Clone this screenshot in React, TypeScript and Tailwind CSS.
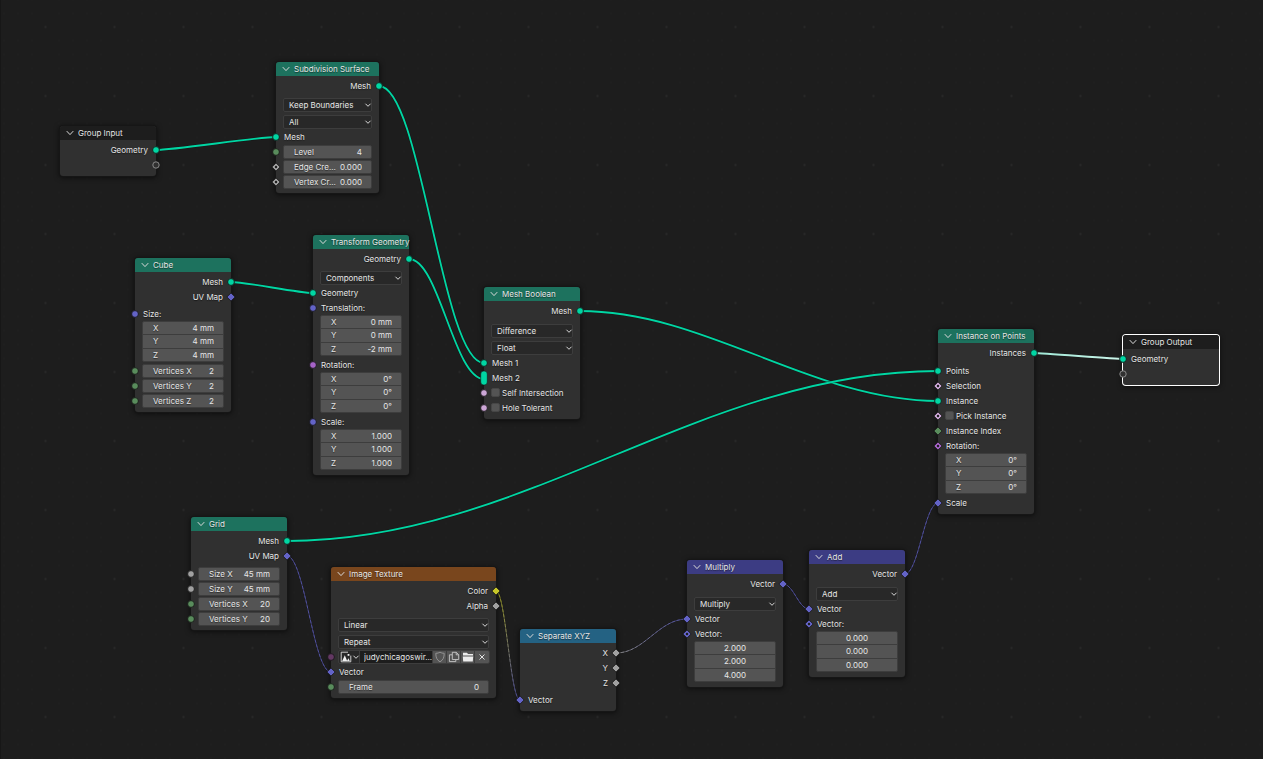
import type { ReactNode } from "react";

type Shape = "circle" | "diamond" | "dot" | "virtual" | "multi";

const GEOMETRY = "#00d6a3";
const VECTOR = "#6363c7";
const INTEGER = "#598c5c";
const FLOAT = "#a1a1a1";
const BOOLEAN = "#cca6d6";
const ROTATION = "#a663c7";
const COLOR = "#c7c729";
const IMAGE = "#633863";

function Socket({ color, shape = "circle", side }: { color: string; shape?: Shape; side: "in" | "out" }) {
  const edge = side === "in" ? "-left-2" : "-right-2";
  return (
    <svg viewBox="-8 -8 16 16" className={`absolute top-0 size-4 ${edge}`} aria-hidden="true">
      {shape === "circle" && <circle r="3.4" fill={color} stroke="#161616" strokeWidth="0.9" />}
      {shape === "virtual" && <circle r="3.2" fill="#303030" stroke="#8a8a8a" strokeWidth="1" />}
      {shape === "multi" && (
        <rect x="-3.3" y="-7" width="6.6" height="14" rx="3" fill={color} stroke="#161616" strokeWidth="0.6" />
      )}
      {(shape === "diamond" || shape === "dot") && (
        <path d="M0-4.1 4.1 0 0 4.1-4.1 0Z" fill={color} stroke="#161616" strokeWidth="0.8" strokeLinejoin="round" />
      )}
      {shape === "dot" && <circle r="1.2" fill="#1d1d1d" />}
    </svg>
  );
}

function Chevron({ className, small = false }: { className: string; small?: boolean }) {
  return (
    <svg viewBox="0 0 8 8" className={className} fill="none" stroke="#d9d9d9" strokeWidth="1" aria-hidden="true">
      <path
        d={small ? "M1.7 3 4 5.3 6.3 3" : "M1 2.4 4 5.6 7 2.4"}
        strokeLinecap="round"
        strokeLinejoin="round"
      />
    </svg>
  );
}

function Node({
  title,
  place,
  header,
  active = false,
  children,
}: {
  title: string;
  place: string;
  header: string;
  active?: boolean;
  children: ReactNode;
}) {
  const outline = active ? "ring-1 ring-white" : "ring-1 ring-[#161616]";
  return (
    <section
      aria-label={title}
      className={`absolute rounded-[3px] bg-[#303030] pb-1 shadow-[0_1px_5px_1px_rgba(0,0,0,0.55)] ${outline} ${place}`}
    >
      <header className={`mb-[2px] flex h-[14px] items-center gap-1 rounded-t-[3px] pl-[6px] ${header}`}>
        <button type="button" aria-label={`Collapse ${title}`} className="size-2">
          <Chevron className="size-2" />
        </button>
        <h2 className="whitespace-nowrap">{title}</h2>
      </header>
      {children}
    </section>
  );
}

function Output({ label, color, shape }: { label: string; color: string; shape?: Shape }) {
  return (
    <div className="relative flex h-[15px] items-center justify-end px-2">
      {label}
      <Socket color={color} shape={shape} side="out" />
    </div>
  );
}

function Input({ label, color, shape }: { label: string; color: string; shape?: Shape }) {
  return (
    <div className="relative flex h-[15px] items-center px-2">
      {label}
      <Socket color={color} shape={shape} side="in" />
    </div>
  );
}

function Check({ label, color, shape }: { label: string; color: string; shape?: Shape }) {
  return (
    <div className="relative flex h-[15px] items-center px-[7px]">
      <label className="flex items-center gap-[2px]">
        <input
          type="checkbox"
          className="size-[9px] appearance-none rounded-[2px] border border-[#464646] bg-[#545454] checked:bg-[#4772b3]"
        />
        {label}
      </label>
      <Socket color={color} shape={shape} side="in" />
    </div>
  );
}

function Dropdown({ label, value }: { label: string; value: string }) {
  return (
    <div className="flex h-[17px] items-end px-[7px]">
      <div className="relative w-full">
        <select
          aria-label={label}
          defaultValue={value}
          className="block h-[14px] w-full appearance-none rounded-[2px] border border-[#3d3d3d] bg-[#282828] pl-[5px]"
        >
          <option>{value}</option>
        </select>
        <Chevron small className="pointer-events-none absolute top-[3px] right-0 size-2" />
      </div>
    </div>
  );
}

function Field({ label, value, color, shape }: { label: string; value: string; color: string; shape?: Shape }) {
  return (
    <div className="relative flex h-[15px] items-center px-[7px]">
      <label className="flex h-[14px] w-full items-center rounded-[2px] border border-[#3d3d3d] bg-[#545454] pr-[9px] pl-[10px]">
        <span className="shrink-0">{label}</span>
        <input defaultValue={value} className="w-0 min-w-0 flex-1 bg-transparent text-right" />
      </label>
      <Socket color={color} shape={shape} side="in" />
    </div>
  );
}

function Vector({ name, values, labelled = true }: { name: string; values: string[]; labelled?: boolean }) {
  const axes = ["X", "Y", "Z"];
  return (
    <div className="px-[7px] pb-px">
      <div className="flex h-[41px] flex-col divide-y divide-[#3d3d3d] rounded-[2px] border border-[#3d3d3d] bg-[#545454]">
        {values.map((value, i) =>
          labelled ? (
            <label key={axes[i]} className="flex flex-1 items-center pr-[9px] pl-[10px]">
              <span>{axes[i]}</span>
              <input
                aria-label={`${name} ${axes[i]}`}
                defaultValue={value}
                className="h-3 w-0 min-w-0 flex-1 bg-transparent text-right"
              />
            </label>
          ) : (
            <div key={axes[i]} className="flex flex-1 items-center">
              <input
                aria-label={`${name} ${axes[i]}`}
                defaultValue={value}
                className="h-3 w-full bg-transparent text-center"
              />
            </div>
          ),
        )}
      </div>
    </div>
  );
}

function IconButton({ label, children }: { label: string; children: ReactNode }) {
  return (
    <button type="button" aria-label={label} className="flex w-[14px] items-center justify-center bg-[#545454]">
      <svg viewBox="0 0 12 12" className="size-3" fill="none" stroke="#c8c8c8" strokeWidth="0.9" aria-hidden="true">
        {children}
      </svg>
    </button>
  );
}

function ImagePicker() {
  return (
    <div className="relative flex h-[15px] items-center pr-[6px] pl-[7px]">
      <div className="flex h-[14px] w-full divide-x divide-[#3d3d3d] overflow-hidden rounded-[2px] border border-[#3d3d3d] bg-[#282828]">
        <button type="button" aria-label="Browse image" className="flex w-[21px] items-center pl-px">
          <svg viewBox="0 0 12 12" className="size-3 shrink-0" aria-hidden="true">
            <path d="M8 1.2H1.2v9.6h9.6V4.6" fill="none" stroke="#e0e0e0" strokeWidth="0.9" />
            <path d="M2.2 10 4.8 4.2 7.2 10ZM7 10 8.4 7.2 9.8 10Z" fill="#f0f0f0" />
            <rect x="7.6" y="3" width="1.8" height="1.8" fill="#f0f0f0" />
          </svg>
          <Chevron small className="size-2 shrink-0" />
        </button>
        <input
          aria-label="Image name"
          defaultValue="judychicagoswir..."
          className="w-0 min-w-0 flex-1 bg-[#1d1d1d] pl-1"
        />
        <IconButton label="Fake user">
          <path d="M6 1.2C4.8 2 3.4 2.3 1.8 2.3 1.8 6.4 2.8 9 6 10.8 9.2 9 10.2 6.4 10.2 2.3 8.6 2.3 7.2 2 6 1.2Z" stroke="#9a9a9a" />
        </IconButton>
        <IconButton label="Duplicate image">
          <path d="M4.3 1.3h4l2.4 2.4v4.8H4.3ZM8.2 1.3v2.5h2.5M4.2 3.8H1.4v6.8h6.4V8.6" />
        </IconButton>
        <IconButton label="Open image">
          <path d="M1 1.8h4l1 1.2h5v1.6H1ZM.8 5.6h10.4l-.4 4.8H1.2Z" fill="#ececec" stroke="none" />
        </IconButton>
        <IconButton label="Unlink image">
          <path d="M3.5 3.5 8.5 8.5M8.5 3.5 3.5 8.5" stroke="#e0e0e0" strokeWidth="1" />
        </IconButton>
      </div>
      <Socket color={IMAGE} side="in" />
    </div>
  );
}

type Link = { from: [number, number]; to: [number, number]; stroke: string; field?: boolean; end?: string };

const links: Link[] = [
  { from: [156, 150], to: [276, 137], stroke: GEOMETRY },
  { from: [379, 86], to: [484, 363], stroke: GEOMETRY },
  { from: [231, 282], to: [313, 293], stroke: GEOMETRY },
  { from: [409, 259], to: [484, 379], stroke: GEOMETRY },
  { from: [580, 311], to: [938, 401], stroke: GEOMETRY },
  { from: [287, 541], to: [938, 371], stroke: GEOMETRY },
  { from: [1034, 353], to: [1123, 359], stroke: "#9fe8d6", end: "#ccf5ea" },
  { from: [287, 556], to: [331, 672], stroke: VECTOR, field: true },
  { from: [496, 591], to: [520, 700], stroke: COLOR, end: VECTOR, field: true },
  { from: [616, 653], to: [687, 619], stroke: FLOAT, end: VECTOR, field: true },
  { from: [783, 584], to: [809, 609], stroke: VECTOR, field: true },
  { from: [905, 574], to: [938, 503], stroke: VECTOR, field: true },
];

function curve([x1, y1]: [number, number], [x2, y2]: [number, number]) {
  const dx = Math.abs(x2 - x1);
  const slope = Math.abs(y2 - y1) / dx;
  const reach = 0.4 * dx * Math.min(1, slope * 3.5);
  return `M${x1} ${y1}C${x1 + reach} ${y1} ${x2 - reach} ${y2} ${x2} ${y2}`;
}

function Wires() {
  return (
    <svg className="absolute inset-0 size-full" aria-hidden="true">
      <defs>
        <pattern id="dots" x="11" y="-7.5" width="69" height="69" patternUnits="userSpaceOnUse">
          <g fill="#222222">
            {[7, 21, 48, 62].map((x) => [7, 21, 48, 62].map((y) => <circle key={`${x}-${y}`} cx={x} cy={y} r="0.6" />))}
          </g>
          <circle cx="34.5" cy="34.5" r="1.1" fill="#2b2b2b" />
        </pattern>
        {links.map(
          (l, i) =>
            l.end && (
              <linearGradient
                key={i}
                id={`wire-${i}`}
                gradientUnits="userSpaceOnUse"
                x1={l.from[0]}
                y1={l.from[1]}
                x2={l.to[0]}
                y2={l.to[1]}
              >
                <stop offset="0" stopColor={l.stroke} />
                <stop offset="1" stopColor={l.end} />
              </linearGradient>
            ),
        )}
      </defs>
      <rect width="100%" height="100%" fill="url(#dots)" />
      <g fill="none">
        {links.map((l, i) => (
          <g key={i}>
            <path d={curve(l.from, l.to)} stroke="#141414" strokeWidth={l.field ? 1.6 : 3} opacity="0.6" />
            <path
              d={curve(l.from, l.to)}
              stroke={l.end ? `url(#wire-${i})` : l.stroke}
              strokeWidth={l.field ? 0.9 : 1.8}
              opacity={l.field ? 0.6 : 1}
            />
            {l.field && (
              <path
                d={curve(l.from, l.to)}
                stroke={l.end ? `url(#wire-${i})` : l.stroke}
                strokeWidth="0.9"
                strokeDasharray="3 2"
                opacity="0.6"
              />
            )}
          </g>
        ))}
      </g>
    </svg>
  );
}

const Gap = () => <div className="h-[2px]" />;
const WideGap = () => <div className="h-[3px]" />;

export default function App() {
  return (
    <main className="relative min-h-screen overflow-hidden border-l border-[#171717] bg-[#1d1d1d] font-['Inter','Liberation_Sans',sans-serif] text-[8px] leading-[10px] text-[#e6e6e6] [text-shadow:0_1px_1px_rgba(0,0,0,0.5)]">
      <div className="absolute inset-y-0 -left-px right-0">
        <Wires />

        <Node title="Group Input" place="left-[60px] top-[126px] w-[96px]" header="bg-[#1d1d1d]">
          <Output label="Geometry" color={GEOMETRY} />
          <Output label="" color={FLOAT} shape="virtual" />
        </Node>

        <Node title="Subdivision Surface" place="left-[276px] top-[62px] w-[103px]" header="bg-[#1d725e]">
          <Output label="Mesh" color={GEOMETRY} />
          <Gap />
          <Dropdown label="UV smooth" value="Keep Boundaries" />
          <Dropdown label="Boundary smooth" value="All" />
          <Input label="Mesh" color={GEOMETRY} />
          <Field label="Level" value="4" color={INTEGER} />
          <Field label="Edge Cre..." value="0.000" color={FLOAT} shape="dot" />
          <Field label="Vertex Cr..." value="0.000" color={FLOAT} shape="dot" />
        </Node>

        <Node title="Cube" place="left-[135px] top-[258px] w-[96px]" header="bg-[#1d725e]">
          <Output label="Mesh" color={GEOMETRY} />
          <Output label="UV Map" color={VECTOR} shape="diamond" />
          <Gap />
          <Input label="Size:" color={VECTOR} />
          <Vector name="Size" values={["4 mm", "4 mm", "4 mm"]} />
          <Field label="Vertices X" value="2" color={INTEGER} />
          <Field label="Vertices Y" value="2" color={INTEGER} />
          <Field label="Vertices Z" value="2" color={INTEGER} />
        </Node>

        <Node title="Transform Geometry" place="left-[313px] top-[235px] w-[96px]" header="bg-[#1d725e]">
          <Output label="Geometry" color={GEOMETRY} />
          <Gap />
          <Dropdown label="Mode" value="Components" />
          <Input label="Geometry" color={GEOMETRY} />
          <Input label="Translation:" color={VECTOR} />
          <Vector name="Translation" values={["0 mm", "0 mm", "-2 mm"]} />
          <Input label="Rotation:" color={ROTATION} />
          <Vector name="Rotation" values={["0°", "0°", "0°"]} />
          <Input label="Scale:" color={VECTOR} />
          <Vector name="Scale" values={["1.000", "1.000", "1.000"]} />
        </Node>

        <Node title="Mesh Boolean" place="left-[484px] top-[287px] w-[96px]" header="bg-[#1d725e]">
          <Output label="Mesh" color={GEOMETRY} />
          <WideGap />
          <Dropdown label="Operation" value="Difference" />
          <Dropdown label="Solver" value="Float" />
          <Input label="Mesh 1" color={GEOMETRY} />
          <Input label="Mesh 2" color={GEOMETRY} shape="multi" />
          <Check label="Self Intersection" color={BOOLEAN} />
          <Check label="Hole Tolerant" color={BOOLEAN} />
        </Node>

        <Node title="Instance on Points" place="left-[938px] top-[329px] w-[96px]" header="bg-[#1d725e]">
          <Output label="Instances" color={GEOMETRY} />
          <WideGap />
          <Input label="Points" color={GEOMETRY} />
          <Input label="Selection" color={BOOLEAN} shape="dot" />
          <Input label="Instance" color={GEOMETRY} />
          <Check label="Pick Instance" color={BOOLEAN} shape="dot" />
          <Input label="Instance Index" color={INTEGER} shape="diamond" />
          <Input label="Rotation:" color={ROTATION} shape="dot" />
          <Vector name="Rotation" values={["0°", "0°", "0°"]} />
          <Input label="Scale" color={VECTOR} shape="diamond" />
        </Node>

        <Node title="Group Output" place="left-[1123px] top-[335px] w-[96px]" header="bg-[#1d1d1d]" active>
          <Input label="Geometry" color={GEOMETRY} />
          <Input label="" color={FLOAT} shape="virtual" />
        </Node>

        <Node title="Grid" place="left-[191px] top-[517px] w-[96px]" header="bg-[#1d725e]">
          <Output label="Mesh" color={GEOMETRY} />
          <Output label="UV Map" color={VECTOR} shape="diamond" />
          <WideGap />
          <Field label="Size X" value="45 mm" color={FLOAT} />
          <Field label="Size Y" value="45 mm" color={FLOAT} />
          <Field label="Vertices X" value="20" color={INTEGER} />
          <Field label="Vertices Y" value="20" color={INTEGER} />
        </Node>

        <Node title="Image Texture" place="left-[331px] top-[567px] w-[165px]" header="bg-[#79461d]">
          <Output label="Color" color={COLOR} shape="diamond" />
          <Output label="Alpha" color={FLOAT} shape="diamond" />
          <Gap />
          <Dropdown label="Interpolation" value="Linear" />
          <Dropdown label="Extension" value="Repeat" />
          <ImagePicker />
          <Input label="Vector" color={VECTOR} shape="diamond" />
          <Field label="Frame" value="0" color={INTEGER} />
        </Node>

        <Node title="Separate XYZ" place="left-[520px] top-[629px] w-[96px]" header="bg-[#246283]">
          <Output label="X" color={FLOAT} shape="diamond" />
          <Output label="Y" color={FLOAT} shape="diamond" />
          <Output label="Z" color={FLOAT} shape="diamond" />
          <Gap />
          <Input label="Vector" color={VECTOR} shape="diamond" />
        </Node>

        <Node title="Multiply" place="left-[687px] top-[560px] w-[96px]" header="bg-[#3c3c83]">
          <Output label="Vector" color={VECTOR} shape="diamond" />
          <WideGap />
          <Dropdown label="Operation" value="Multiply" />
          <Input label="Vector" color={VECTOR} shape="diamond" />
          <Input label="Vector:" color={VECTOR} shape="dot" />
          <Vector name="Vector" values={["2.000", "2.000", "4.000"]} labelled={false} />
        </Node>

        <Node title="Add" place="left-[809px] top-[550px] w-[96px]" header="bg-[#3c3c83]">
          <Output label="Vector" color={VECTOR} shape="diamond" />
          <WideGap />
          <Dropdown label="Operation" value="Add" />
          <Input label="Vector" color={VECTOR} shape="diamond" />
          <Input label="Vector:" color={VECTOR} shape="dot" />
          <Vector name="Vector" values={["0.000", "0.000", "0.000"]} labelled={false} />
        </Node>
      </div>
    </main>
  );
}
